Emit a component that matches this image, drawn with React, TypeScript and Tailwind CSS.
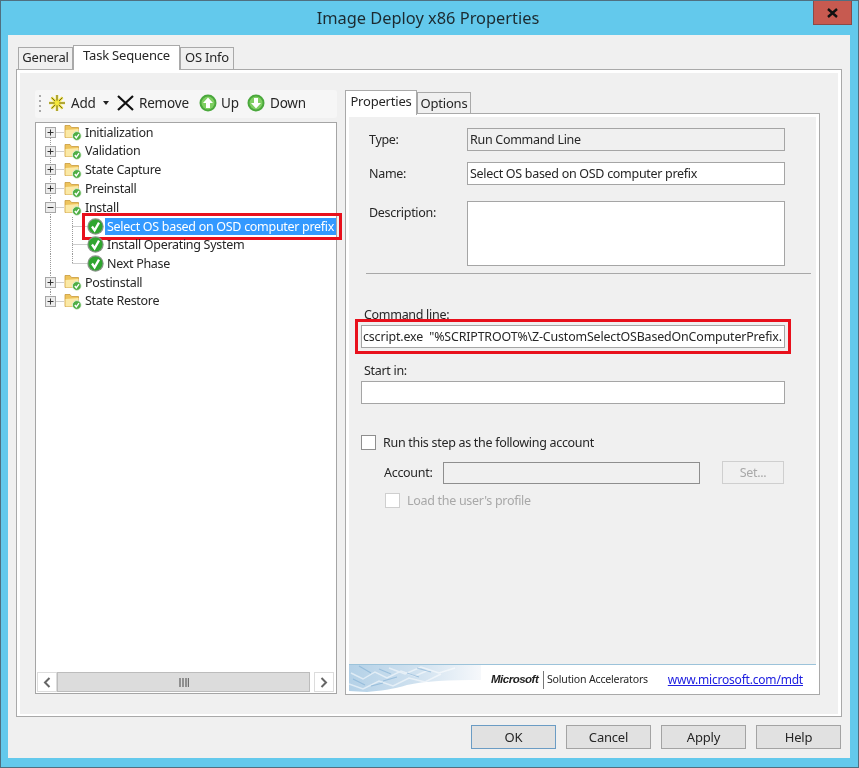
import type { ReactNode } from 'react'

const FONT = "font-['Noto_Sans','Open_Sans',sans-serif]"

function FolderIcon() {
  return (
    <svg width="18" height="18" viewBox="0 0 18 18" className="shrink-0">
      <path d="M1 2.5 L6 2.5 L7.5 4.5 L14.5 4.5 L14.5 14.5 L1 14.5 Z" fill="#eec45c" stroke="#c99a3c" strokeWidth="0.8" />
      <path d="M1.5 7 L14.5 6 L14.5 14.5 L1.5 14.5 Z" fill="#fbe9a6" />
      <circle cx="12.8" cy="13" r="4.4" fill="#4fae45" stroke="#e8f3e4" strokeWidth="0.8" />
      <path d="M10.8 13 L12.3 14.8 L15 11.2" fill="none" stroke="#fff" strokeWidth="1.4" />
    </svg>
  )
}

function CheckIcon() {
  return (
    <svg width="17" height="17" viewBox="0 0 17 17" className="shrink-0">
      <circle cx="8.5" cy="8.5" r="8.2" fill="#8a958a" />
      <circle cx="8.5" cy="8.5" r="7" fill="#2fa52f" />
      <path d="M5 8.5 L7.6 12.4 L12 4.6" fill="none" stroke="#fff" strokeWidth="2.3" />
    </svg>
  )
}

function Gutter({ kind, first, last, child, lastChild }: { kind: 'plus' | 'minus' | 'none'; first?: boolean; last?: boolean; child?: boolean; lastChild?: boolean }) {
  return (
    <svg width={child ? 45 : 22} height="19" className="shrink-0 overflow-visible">
      <g stroke="#9a9a9a" strokeWidth="1" strokeDasharray="1 1" fill="none">
        {!last && <line x1="8.5" y1={first ? 9 : 0} x2="8.5" y2="19" />}
        {last && <line x1="8.5" y1="0" x2="8.5" y2="9" />}
        {!child && <line x1="8.5" y1="9.5" x2="22" y2="9.5" />}
        {child && <line x1="30.5" y1="0" x2="30.5" y2={lastChild ? 9 : 19} />}
        {child && <line x1="30.5" y1="9.5" x2="45" y2="9.5" />}
      </g>
      {kind !== 'none' && (
        <g>
          <rect x="3.5" y="4.5" width="10" height="10" fill="#ececec" stroke="#a6a6a6" />
          <line x1="5.5" y1="9.5" x2="11.5" y2="9.5" stroke="#333" />
          {kind === 'plus' && <line x1="8.5" y1="6.5" x2="8.5" y2="12.5" stroke="#333" />}
        </g>
      )}
    </svg>
  )
}

function Group({ label, kind = 'plus', first, last }: { label: string; kind?: 'plus' | 'minus'; first?: boolean; last?: boolean }) {
  return (
    <div className="flex items-center h-[18.75px]">
      <Gutter kind={kind} first={first} last={last} />
      <FolderIcon />
      <span className="ml-[3px] pt-[1px] whitespace-nowrap">{label}</span>
    </div>
  )
}

function Step({ label, selected, lastChild }: { label: string; selected?: boolean; lastChild?: boolean }) {
  return (
    <div className="relative flex items-center h-[18.75px]">
      <Gutter kind="none" child lastChild={lastChild} />
      <CheckIcon />
      {selected ? (
        <span className="ml-[1px] pl-[2px] w-[231px] overflow-hidden whitespace-nowrap bg-[#3399ff] text-white leading-[17px]">{label}</span>
      ) : (
        <span className="ml-[3px] pt-[1px] whitespace-nowrap">{label}</span>
      )}
      {selected && <div className="absolute left-[40px] w-[260px] top-[-4px] h-[27px] border-[3px] border-[#e8101c]" />}
    </div>
  )
}

function ToolIcon({ dir }: { dir: 'up' | 'down' }) {
  return (
    <svg width="18" height="18" viewBox="0 0 18 18" className="shrink-0">
      <circle cx="9" cy="9" r="8.5" fill="#4aa83c" />
      <circle cx="9" cy="9" r="6.5" fill="#7fcf62" />
      <path d={dir === 'up' ? 'M9 3.5 L14 9 L11 9 L11 14 L7 14 L7 9 L4 9 Z' : 'M9 14.5 L14 9 L11 9 L11 4 L7 4 L7 9 L4 9 Z'} fill="#fff" />
    </svg>
  )
}

function Field({ children, className }: { children?: ReactNode; className: string }) {
  return <div className={`bg-white border-[1.5px] border-[#a5a5a5] pt-[1px] flex items-center whitespace-pre overflow-hidden ${className}`}>{children}</div>
}

function DlgButton({ label, primary }: { label: string; primary?: boolean }) {
  return (
    <div className={`w-[85px] h-[24px] pt-[1px] flex items-center justify-center bg-[#e1e1e1] border-[1.5px] ${primary ? 'border-[#6b9cc4]' : 'border-[#a3a3a3]'}`}>
      {label}
    </div>
  )
}

function Tab({ label, active, className }: { label: string; active?: boolean; className: string }) {
  return (
    <div className={`flex items-center justify-center border-[1.5px] border-b-0 border-[#a9a9a9] ${active ? 'bg-white z-10 relative' : 'bg-[#f0f0f0]'} ${className}`}>
      {label}
    </div>
  )
}

function Waves() {
  return (
    <svg width="132" height="28" viewBox="0 0 132 28" className="shrink-0 self-start">
      <defs>
        <linearGradient id="fade" x1="0" x2="1" y1="0" y2="0">
          <stop offset="0" stopColor="#b4d1e7" />
          <stop offset="0.5" stopColor="#cfe1ef" />
          <stop offset="1" stopColor="#f6f8fb" />
        </linearGradient>
      </defs>
      <path d="M0 0 H132 V15 C100 15 75 16 58 20 C45 24 30 26 18 27 L0 26 Z" fill="url(#fade)" />
      <g fill="none" stroke="#fff" strokeWidth="1.4" opacity="0.55">
        <path d="M2 8 L14 14 L26 7 L38 13 L52 6 L66 11 L80 5" />
        <path d="M0 19 L14 24 L30 16 L44 21 L60 13 L76 17 L92 9" />
        <path d="M40 3 L56 9 L72 2 L90 8 L106 3" />
      </g>
      <g fill="none" stroke="#7fadd2" strokeWidth="1.1" opacity="0.6">
        <path d="M10 1 L22 8 M30 4 L42 9 M4 14 L16 20 M34 16 L48 12 M58 8 L70 12 M22 21 L34 18 M68 3 L82 7" />
      </g>
    </svg>
  )
}

export default function App() {
  return (
    <div className={`${FONT} w-[859px] h-[768px] overflow-hidden bg-[#63c9ec] border border-[#4f6f80] text-[13px] tracking-[-0.2px] text-[#262626] blur-[0.5px]`}>
      {/* title bar */}
      <div className="grid grid-cols-[1fr_auto_1fr] h-[34px] pr-[6px]">
        <div />
        <div className="text-[16.4px] tracking-normal text-[#1c2a30] pt-[5px] pl-[3px]">Image Deploy x86 Properties</div>
        <div className="flex justify-end items-start">
          <div className="w-[39px] h-[25px] -mt-[1px] bg-[#c75a50] border border-[#8a4a48] flex items-center justify-center">
            <svg width="11" height="10" viewBox="0 0 11 10"><path d="M1 1 L10 9 M10 1 L1 9" stroke="#111" strokeWidth="2.4" /></svg>
          </div>
        </div>
      </div>

      {/* client area */}
      <div className="ml-[7px] w-[842px] h-[723px] bg-[#f0f0f0] pt-[11px]">
        <div className="flex items-end pl-[10px] h-[23px]">
          <Tab label="General" className="w-[55px] h-[22px] pb-[1px]" />
          <Tab label="Task Sequence" active className="w-[107px] h-[25px] -mb-[1px] pb-[4px]" />
          <Tab label="OS Info" className="w-[54px] h-[22px] pb-[1px]" />
        </div>

        <div className="ml-[8px] w-[826px] h-[648px] border-[1.5px] border-[#a9a9a9] bg-white p-[3px]">
          <div className="flex w-full h-[641px] bg-[#f0f0f0] pl-[15px] pt-[17px] gap-[8px]">
            {/* left: toolbar and tree */}
            <div className="w-[302px] flex flex-col gap-[4px]">
              <div className="h-[28px] flex items-center bg-[#f6f6f6] rounded-[3px] pl-[4px] pb-[2px] text-[13.5px]">
                <div className="flex flex-col gap-[3px] mr-[7px]">
                  <i className="block w-[2px] h-[2px] bg-[#aaa]" />
                  <i className="block w-[2px] h-[2px] bg-[#aaa]" />
                  <i className="block w-[2px] h-[2px] bg-[#aaa]" />
                  <i className="block w-[2px] h-[2px] bg-[#aaa]" />
                </div>
                <svg width="18" height="18" viewBox="0 0 18 18" className="shrink-0">
                  <g stroke="#f0e040" strokeWidth="2.6"><path d="M9 1 V17 M1 9 H17 M3.5 3.5 L14.5 14.5 M14.5 3.5 L3.5 14.5" /></g>
                  <g stroke="#3a3a20" strokeWidth="0.7"><path d="M9 1 V17 M1 9 H17 M3.5 3.5 L14.5 14.5 M14.5 3.5 L3.5 14.5" /></g>
                  <circle cx="9" cy="9" r="2.4" fill="#f5e83a" />
                </svg>
                <span className="ml-[5px] w-[25px]">Add</span>
                <svg width="6" height="4" viewBox="0 0 6 4" className="ml-[7px]"><path d="M0 0 H6 L3 4 Z" fill="#222" /></svg>
                <svg width="17" height="16" viewBox="0 0 17 16" className="ml-[8px]"><path d="M1 1 L16 15 M16 1 L1 15" stroke="#111" strokeWidth="2.2" /></svg>
                <span className="ml-[5px] w-[50px]">Remove</span>
                <span className="ml-[10px] flex"><ToolIcon dir="up" /></span>
                <span className="ml-[4px] w-[18px]">Up</span>
                <span className="ml-[8px] flex"><ToolIcon dir="down" /></span>
                <span className="ml-[5px]">Down</span>
              </div>

              <div className="h-[572px] flex flex-col bg-white border-[1.5px] border-[#a5a5a5] text-[12.5px] tracking-[-0.3px]">
                <div className="flex-1 pl-[6px]">
                  <Group label="Initialization" first />
                  <Group label="Validation" />
                  <Group label="State Capture" />
                  <Group label="Preinstall" />
                  <Group label="Install" kind="minus" />
                  <Step label="Select OS based on OSD computer prefix" selected />
                  <Step label="Install Operating System" />
                  <Step label="Next Phase" lastChild />
                  <Group label="Postinstall" />
                  <Group label="State Restore" last />
                </div>
                <div className="h-[20px] mx-[1px] mb-[1px] flex items-stretch">
                  <div className="w-[20px] flex items-center justify-center bg-white border border-[#dcdcdc]">
                    <svg width="8" height="11" viewBox="0 0 8 11"><path d="M6.5 1 L2 5.5 L6.5 10" fill="none" stroke="#666" strokeWidth="2" /></svg>
                  </div>
                  <div className="w-[253px] flex items-center justify-center bg-[#dcdcdc] border border-[#bcbcbc]">
                    <svg width="10" height="9" viewBox="0 0 10 9"><path d="M1 0 V9 M4 0 V9 M7 0 V9 M9.5 0 V9" stroke="#707070" strokeWidth="1.4" /></svg>
                  </div>
                  <div className="w-[4px] bg-white" />
                  <div className="w-[20px] flex items-center justify-center bg-white border border-[#dcdcdc]">
                    <svg width="8" height="11" viewBox="0 0 8 11"><path d="M1.5 1 L6 5.5 L1.5 10" fill="none" stroke="#666" strokeWidth="2" /></svg>
                  </div>
                </div>
              </div>
            </div>

            {/* right: properties panel */}
            <div className="w-[475px] flex flex-col">
              <div className="flex items-end h-[23px]">
                <Tab label="Properties" active className="w-[72px] h-[25px] -mb-[2px] pb-[3px]" />
                <Tab label="Options" className="w-[54px] h-[21px] pt-[2px]" />
              </div>
              <div className="h-[582px] border-[1.5px] border-[#a9a9a9] bg-white px-[3px] pt-[3px] flex flex-col">
                <div className="flex-1 bg-[#f0f0f0] text-[12.5px] tracking-[-0.3px] pt-[11px]">
                  <div className="flex items-center h-[23px] pl-[20px]">
                    <span className="w-[98px] pt-[2px]">Type:</span>
                    <Field className="w-[318px] h-[23px] pl-[2px] !bg-[#f0f0f0]">Run Command Line</Field>
                  </div>
                  <div className="flex items-center h-[23px] pl-[20px] mt-[11px]">
                    <span className="w-[98px] pt-[2px]">Name:</span>
                    <Field className="w-[318px] h-[23px] pl-[2px]">Select OS based on OSD computer prefix</Field>
                  </div>
                  <div className="flex items-start h-[65px] pl-[20px] mt-[16px]">
                    <span className="w-[98px] pt-[3px]">Description:</span>
                    <Field className="w-[318px] h-[65px]" />
                  </div>
                  <div className="h-[1px] bg-[#a8a8a8] ml-[17px] w-[445px] mt-[7px]" />
                  <div className="ml-[15px] mt-[31px] h-[18px] pt-[1px] leading-[18px]">Command line:</div>
                  <div className="ml-[12px] mt-[2px] w-[424px]">
                    <Field className="w-[424px] h-[23px] pl-[1px] outline-[3px] outline-[#e8101c] outline-offset-[3px] text-[12.4px] tracking-[-0.14px]">{'cscript.exe  "%SCRIPTROOT%\\Z-CustomSelectOSBasedOnComputerPrefix.'}</Field>
                  </div>
                  <div className="ml-[15px] mt-[13px] h-[18px] pt-[1px] leading-[18px]">Start in:</div>
                  <Field className="ml-[12px] mt-[2px] w-[424px] h-[23px]" />
                  <div className="flex items-center ml-[12px] mt-[31px] h-[15px]">
                    <div className="w-[15px] h-[15px] bg-white border-[1.5px] border-[#8e8e8e]" />
                    <span className="ml-[7px] pt-[1px]">Run this step as the following account</span>
                  </div>
                  <div className="flex items-center ml-[35px] mt-[11px] h-[23px]">
                    <span className="w-[59px] pt-[1px]">Account:</span>
                    <Field className="w-[257px] h-[22px] !bg-[#f0f0f0] !border-[#8e8e8e]" />
                    <div className="ml-[22px] w-[62px] h-[23px] pt-[1px] flex items-center justify-center border-[1.5px] border-[#cfcfcf] text-[#a8a8a8]">Set...</div>
                  </div>
                  <div className="flex items-center ml-[36px] mt-[9px] h-[15px] text-[#a8a8a8]">
                    <div className="w-[15px] h-[15px] bg-white border-[1.5px] border-[#cfcfcf]" />
                    <span className="ml-[7px] pt-[1px]">Load the user's profile</span>
                  </div>
                </div>
                <div className="h-[30px] flex items-center border-t border-[#9cc3da] bg-white">
                  <Waves />
                  <span className="ml-[10px] w-[50px] shrink-0 font-['Liberation_Sans',sans-serif] italic font-bold text-[11.5px] tracking-[-0.5px] text-[#222]">Microsoft</span>
                  <div className="w-[1px] shrink-0 h-[18px] bg-[#777] ml-[2px]" />
                  <span className="ml-[3px] text-[10.6px] whitespace-nowrap">Solution Accelerators</span>
                  <span className="ml-auto mr-[13px] text-[12px] underline text-[#2020e0] whitespace-nowrap">www.microsoft.com/mdt</span>
                </div>
              </div>
            </div>
          </div>
        </div>

        <div className="flex justify-end gap-[10px] pr-[9px] mt-[8px]">
          <DlgButton label="OK" primary />
          <DlgButton label="Cancel" />
          <DlgButton label="Apply" />
          <DlgButton label="Help" />
        </div>
      </div>
    </div>
  )
}
